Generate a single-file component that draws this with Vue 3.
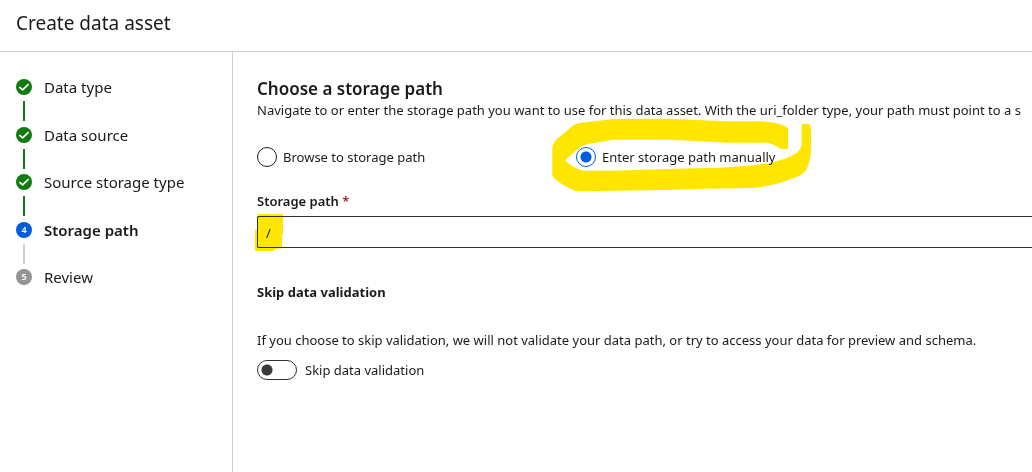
<script setup>
import { ref } from 'vue'

const steps = [
  { label: 'Data type', state: 'done' },
  { label: 'Data source', state: 'done' },
  { label: 'Source storage type', state: 'done' },
  { label: 'Storage path', state: 'current' },
  { label: 'Review', state: 'upcoming' },
]
const mode = ref('manual')
const path = ref('/')
const skip = ref(false)
</script>

<template>
  <div class="page">
    <header class="top">
      <h1>Create data asset</h1>
    </header>
    <div class="body">
      <nav class="side" aria-label="Progress">
        <ol class="steps">
          <li v-for="(step, i) in steps" :key="step.label" class="step" :class="step.state">
            <span class="rail">
              <span class="badge">
                <svg v-if="step.state === 'done'" viewBox="0 0 16 16" aria-hidden="true">
                  <path d="M3.4 8.1 6.6 10.9 12.6 5.2" fill="none" stroke="#fff" stroke-width="1.8" />
                </svg>
                <template v-else>{{ i + 1 }}</template>
              </span>
              <span v-if="i < steps.length - 1" class="line"></span>
            </span>
            <span class="name">{{ step.label }}</span>
          </li>
        </ol>
      </nav>
      <main class="main">
        <h2>Choose a storage path</h2>
        <p class="intro">Navigate to or enter the storage path you want to use for this data asset. With the uri_folder type, your path must point to a s</p>
        <div class="options" role="radiogroup" aria-label="Storage path method">
          <label class="option">
            <input v-model="mode" type="radio" name="mode" value="browse" />
            <span>Browse to storage path</span>
          </label>
          <label class="option">
            <input v-model="mode" type="radio" name="mode" value="manual" />
            <span>Enter storage path manually</span>
            <svg class="marker" viewBox="36 54 780 222" aria-hidden="true">
              <path
                d="M744 84C728 72 700 65 660 64L560 64 385 56 220 57 150 65C110 68 100 74 95 80L50 118C42 128 37 135 37 145V228C50 245 70 255 95 268C105 273 110 274 125 274L380 270 500 266 640 264C690 258 720 250 745 240C775 230 795 222 803 200C812 180 813 160 813 140V88Q812 72 803 72H785V135C780 150 775 158 755 167C730 180 690 190 640 196L540 203 400 206 220 212H130C105 205 95 198 75 181L110 150C120 140 130 134 150 131L220 119H385L560 128H680C705 132 712 142 725 147H744Z"
                fill="#ffe600"
              />
            </svg>
          </label>
        </div>
        <label class="field-label" for="path">Storage path <span class="required">*</span></label>
        <div class="field">
          <input id="path" v-model="path" type="text" required />
          <svg class="field-marker" viewBox="0 0 84 111" aria-hidden="true">
            <path d="M9 0H84V60L81 62V103L58 105V111H0V48H9Z" fill="#ffe600" />
          </svg>
        </div>
        <h3>Skip data validation</h3>
        <p class="note">If you choose to skip validation, we will not validate your data path, or try to access your data for preview and schema.</p>
        <label class="switch">
          <input v-model="skip" type="checkbox" role="switch" />
          <span>Skip data validation</span>
        </label>
      </main>
    </div>
  </div>
</template>

<style>
body {
  background: #fff;
}
</style>

<style scoped>
.page {
  display: flex;
  flex-direction: column;
  min-height: 100vh;
  overflow: hidden;
  background: #fff;
  color: #1b1a19;
  font: 13px/20px "Noto Sans", "Open Sans", sans-serif;
}
h1,
h2,
h3,
p,
ol {
  margin: 0;
  padding: 0;
}
.top {
  padding: 9px 16px 14px;
  border-bottom: 1px solid #d2d0ce;
}
h1 {
  font-size: 19px;
  line-height: 28px;
  font-weight: 400;
}
.body {
  display: flex;
  flex: 1;
}
.side {
  flex: 0 0 232px;
  border-right: 1px solid #d2d0ce;
}
.steps {
  display: grid;
  grid-auto-rows: 1fr;
  min-height: 238px;
  padding: 27px 16px 0;
  list-style: none;
}
.step {
  display: flex;
  gap: 12px;
}
.rail {
  display: flex;
  flex-direction: column;
  align-items: center;
  gap: 6px;
}
.badge {
  display: flex;
  align-items: center;
  justify-content: center;
  width: 16px;
  height: 16px;
  border-radius: 50%;
  background: #107c10;
  color: #fff;
  font-size: 9px;
  line-height: 16px;
  font-weight: 600;
}
.badge svg {
  width: 16px;
  height: 16px;
}
.line {
  width: 2px;
  height: 20px;
  background: #107c10;
}
.current .badge {
  background: #015cda;
}
.current .line {
  background: #d2d0ce;
}
.upcoming .badge {
  background: #979593;
}
.name {
  font-size: 15px;
  line-height: 16px;
}
.current .name {
  font-weight: 600;
}
.main {
  flex: 1;
  min-width: 0;
  padding: 25px 0 0 24px;
}
h2 {
  font-size: 17px;
  line-height: 24px;
  font-weight: 600;
}
.intro {
  white-space: nowrap;
  line-height: 18px;
}
.options {
  display: grid;
  grid-template-columns: 311px 1fr;
  gap: 8px;
  margin-top: 28px;
}
.option {
  position: relative;
  isolation: isolate;
  display: flex;
  align-items: center;
  gap: 6px;
  justify-self: start;
}
.option input {
  appearance: none;
  width: 20px;
  height: 20px;
  margin: 0;
  border: 1px solid #1b1a19;
  border-radius: 50%;
}
.option input:checked {
  border-color: #015cda;
  background: radial-gradient(circle, #015cda 5px, transparent 6px);
}
.marker {
  position: absolute;
  z-index: -1;
  left: -24px;
  top: -29px;
  width: 260px;
  height: 74px;
}
.field-label {
  display: block;
  margin-top: 24px;
  font-weight: 600;
}
.required {
  color: #a4262c;
}
.field {
  position: relative;
  margin-top: 5px;
}
.field input {
  display: block;
  box-sizing: border-box;
  width: 100%;
  height: 32px;
  padding: 2px 8px 0;
  border: 1px solid #323130;
  border-right: 0;
  border-radius: 2px 0 0 2px;
  background: transparent;
  color: inherit;
  font: inherit;
}
.field-marker {
  position: absolute;
  left: -2px;
  top: -2px;
  width: 28px;
  height: 37px;
  mix-blend-mode: multiply;
  pointer-events: none;
}
h3 {
  margin-top: 34px;
  font-size: 13px;
  line-height: 20px;
  font-weight: 700;
}
.note {
  margin-top: 28px;
}
.switch {
  display: inline-flex;
  align-items: center;
  gap: 8px;
  margin-top: 10px;
}
.switch input {
  appearance: none;
  width: 40px;
  height: 20px;
  margin: 0;
  border: 1px solid #323130;
  border-radius: 10px;
  background: radial-gradient(circle at 9px 9px, #3b3a39 5px, transparent 6px);
}
.switch input:checked {
  background: radial-gradient(circle at 29px 9px, #3b3a39 5px, transparent 6px);
}
</style>
